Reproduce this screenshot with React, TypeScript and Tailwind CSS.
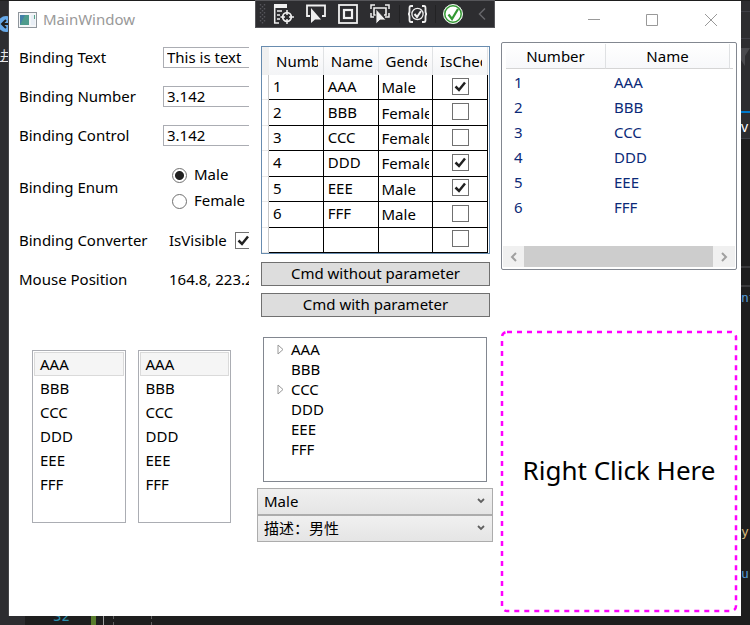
import type { ReactNode } from "react";

const letters = ["AAA", "BBB", "CCC", "DDD", "EEE", "FFF"];

const people = [
  { number: "1", name: "AAA", gender: "Male", checked: true },
  { number: "2", name: "BBB", gender: "Female", checked: false },
  { number: "3", name: "CCC", gender: "Female", checked: false },
  { number: "4", name: "DDD", gender: "Female", checked: true },
  { number: "5", name: "EEE", gender: "Male", checked: true },
  { number: "6", name: "FFF", gender: "Male", checked: false },
  { number: "", name: "", gender: "", checked: false },
];

function CheckBox({ checked, label }: { checked: boolean; label: string }) {
  return (
    <span className="relative block size-[17px] shrink-0">
      <input
        type="checkbox"
        defaultChecked={checked}
        aria-label={label}
        className="peer block size-[17px] appearance-none border border-[#707070] bg-white"
      />
      <svg
        viewBox="0 0 17 17"
        className="pointer-events-none absolute inset-0 hidden size-[17px] peer-checked:block"
        fill="none"
        stroke="#212121"
        strokeWidth="2.5"
      >
        <path d="M3.5 8.5 7 12 13 4.5" />
      </svg>
    </span>
  );
}

function FormRow({ label, htmlFor, tall, children }: { label: string; htmlFor?: string; tall?: boolean; children: ReactNode }) {
  return (
    <div className={`flex items-center ${tall ? "h-[66px]" : "h-[39px]"}`}>
      <label htmlFor={htmlFor} className="w-36 shrink-0 pb-[2px]">
        {label}
      </label>
      {children}
    </div>
  );
}

function TextBox({ id, value }: { id: string; value: string }) {
  return (
    <input
      id={id}
      type="text"
      defaultValue={value}
      className="h-[21px] w-[120px] shrink-0 border border-[#abadb3] bg-white px-[3px] pb-[2px] leading-[17px]"
    />
  );
}

function Radio({ label, checked }: { label: string; checked?: boolean }) {
  return (
    <label className="flex h-[26px] items-center gap-[7px] pl-[9px]">
      <input
        type="radio"
        name="gender"
        defaultChecked={checked}
        className="size-[15px] appearance-none rounded-full border border-[#707070] bg-white checked:bg-[radial-gradient(circle,#212121_4px,#ffffff_5px)]"
      />
      <span className="pb-[2px]">{label}</span>
    </label>
  );
}

function BindingForm() {
  return (
    <section className="mr-1 overflow-hidden pl-[10px]">
      <FormRow label="Binding Text" htmlFor="text">
        <TextBox id="text" value="This is text" />
      </FormRow>
      <FormRow label="Binding Number" htmlFor="number">
        <TextBox id="number" value="3.142" />
      </FormRow>
      <FormRow label="Binding Control" htmlFor="control">
        <TextBox id="control" value="3.142" />
      </FormRow>
      <FormRow label="Binding Enum" tall>
        <div>
          <Radio label="Male" checked />
          <Radio label="Female" />
        </div>
      </FormRow>
      <FormRow label="Binding Converter">
        <span className="mr-2 pb-[2px] pl-[6px]">IsVisible</span>
        <CheckBox checked label="IsVisible" />
      </FormRow>
      <FormRow label="Mouse Position">
        <output className="pb-[2px] pl-[6px] whitespace-nowrap">164.8, 223.2</output>
      </FormRow>
    </section>
  );
}

function DataGrid() {
  return (
    <div className="h-[208px] overflow-hidden border border-[#688caf] pr-px">
      <table className="h-full w-full table-fixed border-separate border-spacing-0">
        <thead>
          <tr className="h-[28px]">
            <th className="w-[7px] bg-[#f0f0f0] p-0" />
            {["Number", "Name", "Gender", "IsChecked"].map((title) => (
              <th
                key={title}
                className="border-r border-[#e0e2e4] bg-linear-to-b from-white to-[#f3f4f6] p-0 pr-[5px] pl-[7px] text-left font-normal"
              >
                <div className="overflow-hidden whitespace-nowrap">{title}</div>
              </th>
            ))}
          </tr>
        </thead>
        <tbody>
          {people.map((p, i) => (
            <tr key={i} className="h-[25px]">
              <th className="border-r border-b border-r-[#c8c8c8] border-b-[#e8e8e8] bg-white p-0" />
              <td className="border-r border-b border-black p-0 pb-[2px] pl-1 leading-5">{p.number}</td>
              <td className="border-r border-b border-black p-0 pb-[2px] pl-1 leading-5">{p.name}</td>
              <td className="border-r border-b border-black p-0 px-[3px] leading-5">
                <div className="overflow-hidden">{p.gender}</div>
              </td>
              <td className="border-r border-b border-black p-0 pb-[2px]">
                <div className="flex justify-center">
                  <CheckBox checked={p.checked} label={`IsChecked ${p.number}`} />
                </div>
              </td>
            </tr>
          ))}
        </tbody>
      </table>
    </div>
  );
}

function CommandButton({ children }: { children: ReactNode }) {
  return (
    <button type="button" className="h-6 w-full border border-[#707070] bg-[#dddddd] pb-[2px] leading-5">
      {children}
    </button>
  );
}

function ListView() {
  return (
    <div className="m-1 flex h-[228px] flex-col rounded-[2px] border border-[#828790] p-px">
      <table className="w-full table-fixed border-separate border-spacing-0 pr-[2px] pl-[3px]">
        <thead>
          <tr className="h-[25px]">
            {["Number", "Name"].map((title) => (
              <th
                key={title}
                className="border-r border-b border-r-[#dfe1e3] border-b-[#d5d5d5] bg-linear-to-b from-white to-[#f7f8fa] p-0 font-normal first:w-[100px]"
              >
                {title}
              </th>
            ))}
            <th className="w-[3px] border-b border-[#d5d5d5] p-0" />
          </tr>
        </thead>
        <tbody className="text-[#0b2a78]">
          {letters.map((name, i) => (
            <tr key={name} className="h-[25px]">
              <td className="p-0 pl-2">{i + 1}</td>
              <td className="p-0 pl-2">{name}</td>
            </tr>
          ))}
        </tbody>
      </table>
      <div className="mt-auto mb-px flex h-[21px] bg-[#f0f0f0]">
        <button type="button" aria-label="Scroll left" className="flex w-[21px] items-center justify-center">
          <svg viewBox="0 0 8 10" className="h-[10px] w-2" fill="none" stroke="#a0a0a0" strokeWidth="2">
            <path d="M6 1 2 5 6 9" />
          </svg>
        </button>
        <div className="flex-1 bg-[#cdcdcd]" />
        <button type="button" aria-label="Scroll right" className="flex w-[22px] items-center justify-center">
          <svg viewBox="0 0 8 10" className="h-[10px] w-2" fill="none" stroke="#a0a0a0" strokeWidth="2">
            <path d="M2 1 6 5 2 9" />
          </svg>
        </button>
      </div>
    </div>
  );
}

function ListBox({ label }: { label: string }) {
  return (
    <select
      size={6}
      aria-label={label}
      className="h-[173px] min-w-0 flex-1 overflow-hidden border border-[#abadb3] bg-white bg-none p-px"
    >
      {letters.map((l) => (
        <option
          key={l}
          className="h-6 min-h-0 border border-transparent px-[5px] py-0 pt-px leading-[22px] first:border-[#dadada] first:bg-[#f5f5f5]"
        >
          {l}
        </option>
      ))}
    </select>
  );
}

function TreeView() {
  return (
    <ul className="mx-[10px] mt-[10px] h-[145px] border border-[#828790] pt-px">
      {letters.map((l) => (
        <li key={l} className="flex h-5 items-center">
          <span className="flex w-[27px] justify-center pl-[5px]">
            {(l === "AAA" || l === "CCC") && (
              <svg viewBox="0 0 7 11" className="h-[11px] w-[7px]" fill="white" stroke="#989898">
                <path d="M1 1V10L6 5.5Z" />
              </svg>
            )}
          </span>
          {l}
        </li>
      ))}
    </ul>
  );
}

function ComboBox({ label, options }: { label: string; options: string[] }) {
  return (
    <div className="relative">
      <select
        aria-label={label}
        className="block h-[27px] w-full appearance-none border border-[#acacac] bg-linear-to-b from-[#f0f0f0] to-[#e5e5e5] px-[6px] leading-[25px]"
      >
        {options.map((o) => (
          <option key={o}>{o}</option>
        ))}
      </select>
      <svg
        viewBox="0 0 8 6"
        className="pointer-events-none absolute top-[10px] right-2 h-[6px] w-2"
        fill="none"
        stroke="#606060"
        strokeWidth="1.8"
      >
        <path d="M1 1 4 4 7 1" />
      </svg>
    </div>
  );
}

function DebugToolbar() {
  return (
    <div className="absolute -top-px left-[246px] flex h-[28px] w-[240px] items-center border border-[#56565a] bg-[#2d2d30]">
      <svg viewBox="0 0 238 26" className="h-[26px] w-[238px]" fill="none" stroke="#f0f0f0" strokeWidth="1.5">
        <g stroke="#55555a" strokeWidth="1.4" strokeDasharray="1.4 2.6">
          <path d="M4.5 3V23M8.5 3V23" />
          <path d="M6.5 5V23" />
        </g>
        <g>
          <path d="M18 5H31" strokeWidth="4" />
          <path d="M18.7 4V22H23M21 10H26M21 14H24M21 18H24" />
          <circle cx="31" cy="16" r="4.3" strokeWidth="1.8" />
          <path d="M31 9V14M31 18V23M24.5 16H29M33 16H38" />
        </g>
        <g>
          <path d="M54 15H51V4.5H69V15H66" strokeWidth="1.8" />
          <path d="M55 7V22L59 18.5H65Z" fill="#f0f0f0" stroke="none" />
        </g>
        <g strokeWidth="1.8">
          <rect x="83" y="4" width="18" height="18" />
          <rect x="88" y="9" width="8" height="8" strokeWidth="2.2" />
        </g>
        <g>
          <path d="M115 8V4H119M129 4H133V8M133 12V16H129M115 12V16H118" />
          <path d="M120 14H118V7H130V14H128" strokeWidth="1.6" />
          <path d="M120 8V23L124 19H130Z" fill="#f0f0f0" stroke="#2d2d30" strokeWidth="0.8" />
        </g>
        <path d="M143.5 4V22M179.5 4V22" stroke="#222224" strokeWidth="1" />
        <g>
          <path
            d="M157 5H155Q153.5 5 153.5 7V10Q153.5 13 152 13Q153.5 13 153.5 16V19Q153.5 21 155 21H157M166 5H168Q169.5 5 169.5 7V10Q169.5 13 171 13Q169.5 13 169.5 16V19Q169.5 21 168 21H166"
            strokeWidth="1.8"
          />
          <circle cx="161.5" cy="13" r="5.6" strokeWidth="1.3" />
          <path d="M158.5 13 161 16 165 10" strokeWidth="2" />
        </g>
        <g>
          <circle cx="197" cy="13" r="9.5" fill="white" stroke="#e8f4e8" strokeWidth="1" />
          <circle cx="197" cy="13" r="8.2" stroke="#339933" strokeWidth="1.5" />
          <path d="M192.5 13.5 196 18 202 8" stroke="#339933" strokeWidth="2.3" />
        </g>
        <path d="M229 7.5 223.5 13 229 18.5" stroke="#66666a" />
      </svg>
    </div>
  );
}

function TitleBar() {
  return (
    <header className="flex h-[37px] items-center">
      <svg viewBox="0 0 19 16" className="ml-[9px] h-4 w-[19px]">
        <rect x="0.5" y="0.5" width="18" height="15" fill="#f4f6f8" stroke="#8f969c" />
        <rect x="2" y="3" width="9" height="10" fill="#4e9b8c" />
        <path d="M2 3H7L2 13Z" fill="#4380a8" />
        <path d="M13 3H17V13H13Z" fill="#e8eef5" />
        <path d="M16.5 3V7" stroke="#55a58a" />
      </svg>
      <h1 className="ml-[6px] pb-[2px] text-[#999999]">MainWindow</h1>
      <div className="ml-auto flex items-center">
        <button type="button" aria-label="Minimize" className="flex h-8 w-[58px] items-center justify-center">
          <svg viewBox="0 0 12 12" className="size-3" stroke="#999999">
            <path d="M0 5.5H12" />
          </svg>
        </button>
        <button type="button" aria-label="Maximize" className="flex h-8 w-[58px] items-center justify-center">
          <svg viewBox="0 0 12 12" className="size-3" fill="none" stroke="#999999">
            <path d="M0.5 0.5H11.5V11.5H0.5Z" />
          </svg>
        </button>
        <button type="button" aria-label="Close" className="flex h-8 w-[60px] items-center justify-center">
          <svg viewBox="0 0 12 12" className="size-3" stroke="#999999">
            <path d="M0 0 12 12M12 0 0 12" />
          </svg>
        </button>
      </div>
    </header>
  );
}

function EditorRight() {
  return (
    <aside className="w-[9px] shrink-0 overflow-hidden bg-[#1e1e1e] font-['DejaVu_Sans_Mono',monospace] text-[13px] leading-4">
      <div className="flex h-[110px] flex-col bg-[#2d2d30]">
        <div className="h-[11px] border-b border-[#3f3f46]" />
        <div className="h-[27px] border-b border-[#3f3f46]" />
        <svg viewBox="0 0 9 18" className="mt-[9px] h-[18px] w-[9px]">
          <path d="M0 0H9L4 8V18L0 12Z" fill="#4a4a4e" />
        </svg>
      </div>
      <div className="h-[2px] bg-[#007acc]" />
      <div className="h-[26px] border-b border-[#3f3f46] bg-[#2d2d30] font-['Noto_Sans',sans-serif] text-[14px] leading-7 text-white">
        v
      </div>
      <div className="h-[129px] border-b-2 border-[#3a3a3c]" />
      <div className="h-[19px] border-b-2 border-[#3a3a3c]" />
      <p className="mt-[3px] text-[#569cd6]">nt</p>
      <p className="mt-[218px] text-[#d7ba7d]">y</p>
      <p className="mt-[26px] text-[#569cd6]">ur</p>
    </aside>
  );
}

export default function App() {
  return (
    <div className="flex min-h-screen flex-col bg-[#1e1e1e] pt-px font-['Noto_Sans','Noto_Sans_CJK_SC',sans-serif] text-[15px] leading-5 text-black">
      <div className="flex flex-1">
        <aside className="w-[9px] shrink-0 overflow-hidden border-r border-[#444446] bg-[#2d2d30] pt-[15px] text-[#e8e8e8]">
          <svg viewBox="2 0 14 16" className="h-4 w-[14px]">
            <circle cx="8" cy="8" r="8" fill="#66a8e8" />
            <path d="M13 8H4M8 4 4 8 8 12" stroke="#1e1e1e" strokeWidth="2" fill="none" />
          </svg>
          <p className="mt-[13px] text-[13px] underline">井</p>
        </aside>
        <main className="relative flex flex-1 flex-col bg-white">
          <TitleBar />
          <DebugToolbar />
          <div className="grid flex-1 grid-cols-3 grid-rows-2">
            <BindingForm />
            <section className="pt-2 pr-[7px] pl-2">
              <DataGrid />
              <div className="mt-2 flex flex-col gap-[7px]">
                <CommandButton>Cmd without parameter</CommandButton>
                <CommandButton>Cmd with parameter</CommandButton>
              </div>
            </section>
            <ListView />
            <section className="flex items-start gap-3 pt-[23px] pr-[22px] pl-[23px]">
              <ListBox label="First list" />
              <ListBox label="Second list" />
            </section>
            <section>
              <TreeView />
              <div className="mx-1 mt-[6px]">
                <ComboBox label="Gender" options={["Male", "Female"]} />
                <ComboBox label="Gender description" options={["描述：男性", "描述：女性"]} />
              </div>
            </section>
            <section className="relative m-1 flex items-center justify-center pb-[3px] text-[26px]">
              <svg
                className="absolute inset-px size-[calc(100%-2px)] overflow-visible"
                fill="none"
                aria-hidden="true"
              >
                <rect width="100%" height="100%" rx="5" stroke="#ff00ff" strokeWidth="2.5" strokeDasharray="5 5" />
              </svg>
              <span>Right Click Here</span>
            </section>
          </div>
        </main>
        <EditorRight />
      </div>
      <footer className="flex h-[9px] overflow-hidden bg-[#1e1e1e]">
        <div className="w-[25px] bg-[#2d2d30]" />
        <span className="-mt-2 ml-7 w-[38px] font-['DejaVu_Sans_Mono',monospace] text-[14px] leading-4 text-[#2b91af]">
          32
        </span>
        <div className="w-[5px] bg-[#587c2c]" />
        <div className="ml-[7px] w-px bg-[#a0a0a0]" />
        <div className="ml-[9px] border-l border-dashed border-[#606060]" />
        <div className="ml-[37px] border-l border-dashed border-[#606060]" />
      </footer>
    </div>
  );
}
